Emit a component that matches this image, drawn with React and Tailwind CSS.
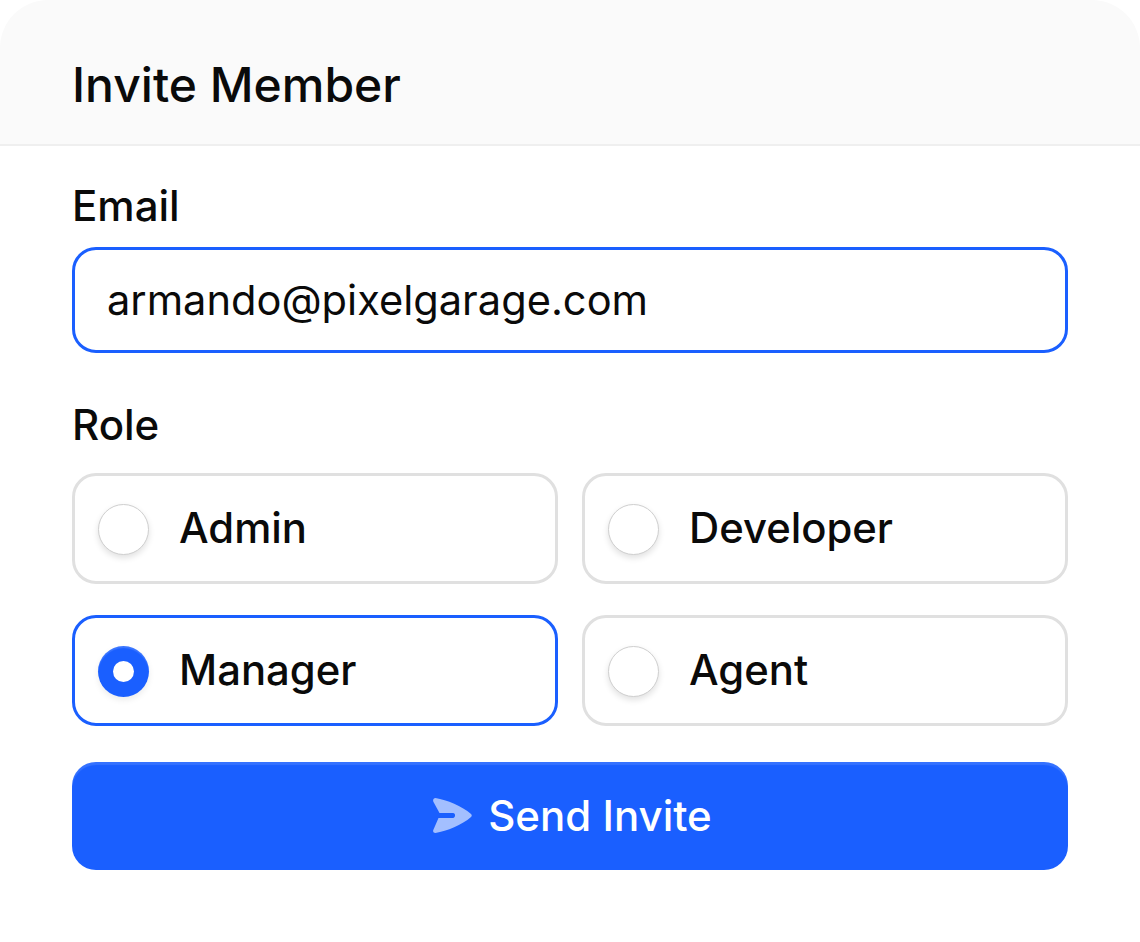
const roles = [
  { name: 'Admin' },
  { name: 'Developer' },
  { name: 'Manager', checked: true },
  { name: 'Agent' },
];

function RoleOption({ name, checked }) {
  return (
    <div
      className={`flex h-[111px] items-center rounded-[24px] border-[3px] pl-[23px] ${
        checked ? 'border-[#1a5fff]' : 'border-[#e0e0e0]'
      }`}
    >
      {checked ? (
        <span className="mt-[1px] flex h-[51px] w-[51px] items-center justify-center rounded-full bg-[#1a5fff] shadow-[inset_0_2px_1px_rgba(255,255,255,0.15),0_3px_6px_rgba(0,0,0,0.08)]">
          <span className="h-[21px] w-[21px] rounded-full bg-white" />
        </span>
      ) : (
        <span className="mt-[1px] h-[51px] w-[51px] rounded-full border border-[#cfcfcf] bg-white shadow-[0_3px_6px_rgba(0,0,0,0.12)]" />
      )}
      <span className="ml-[30px] pt-[1px] text-[41.8px] font-[450] leading-none text-[#0a0a0a]">{name}</span>
    </div>
  );
}

export default function App() {
  return (
    <div className="h-[942px] w-[1140px] bg-white font-['Inter',sans-serif] antialiased">
      <div className="flex h-[146px] items-center rounded-t-[48px] border-b-2 border-[#efefef] bg-[#fafafa] px-[72px] pt-[25px]">
        <h1 className="text-[48px] font-[450] leading-none text-[#0a0a0a]">Invite Member</h1>
      </div>
      <div className="px-[72px]">
        <label className="mt-[35px] block h-[50px] text-[42px] font-[450] leading-[50px] text-[#0a0a0a]">Email</label>
        <div className="mt-[16px] flex h-[106px] items-center rounded-[24px] border-[3px] border-[#1a5fff] px-[32px] pt-[2px] text-[41.6px] leading-none text-[#0a0a0a]">
          armando@pixelgarage.com
        </div>
        <label className="mt-[47px] block h-[50px] text-[42px] font-[450] leading-[50px] text-[#0a0a0a]">Role</label>
        <div className="mt-[23px] grid grid-cols-2 gap-x-[24px] gap-y-[31px]">
          {roles.map((role) => (
            <RoleOption key={role.name} name={role.name} checked={role.checked} />
          ))}
        </div>
        <button className="mt-[36px] flex h-[108px] w-full items-center justify-center gap-[15px] rounded-[24px] bg-[#1a5fff] pl-[5px] text-[42px] font-[450] leading-none text-white shadow-[inset_0_3px_1px_rgba(255,255,255,0.12)]">
          <svg width="40" height="36" viewBox="0 0 40 36" fill="#a3bfff">
            <path d="M2.5 0C14 2 29 8 38 16C39 17 39 18 38 19C29 27 14 33 2.5 35C0.5 35 -0.5 33.5 0.5 31.5L5.5 20H20C22.5 20 23 15 20 15H6.5L0.5 4C-0.5 2 0.5 0 2.5 0Z" />
          </svg>
          <span>Send Invite</span>
        </button>
      </div>
    </div>
  );
}
